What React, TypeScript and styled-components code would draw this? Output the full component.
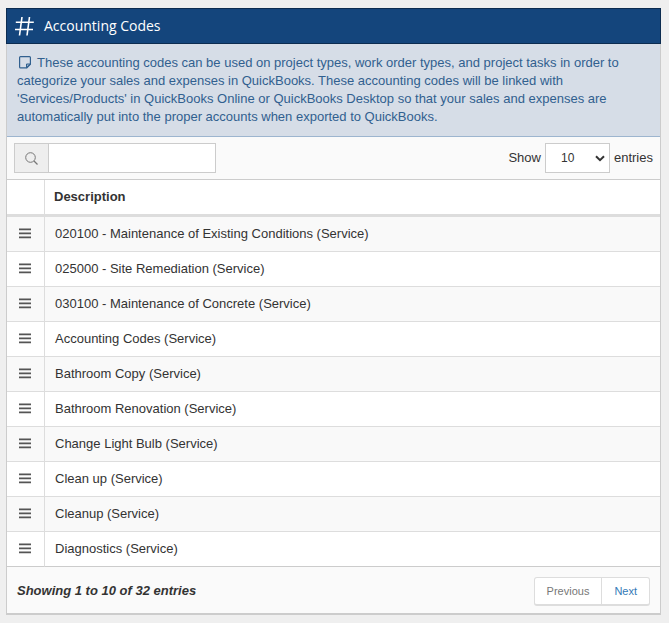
import React, { useState } from "react";
import styled, { createGlobalStyle } from "styled-components";

const GlobalStyle = createGlobalStyle`
  * { box-sizing: border-box; }
  body {
    margin: 0;
    background: #efefef;
    color: #333;
    font-family: "Liberation Sans", Arial, sans-serif;
    font-size: 13px;
    line-height: 18px;
  }
  button, input, select { font: inherit; }
`;

const Page = styled.main`
  padding: 8px;
  padding-left: 6px;
`;

const Header = styled.header`
  display: flex;
  align-items: center;
  gap: 10px;
  height: 36px;
  padding: 0 8px;
  background: #14457c;
  border: 1px solid #0c2c50;
  color: #fff;
`;

const Title = styled.h1`
  margin: 0;
  font: 400 14px/20px "Open Sans", sans-serif;
`;

const Body = styled.section`
  border: 1px solid #ccc;
  border-top: 0;
  border-bottom-width: 2px;
  background: #fafafa;
`;

const Info = styled.p`
  margin: 0;
  padding: 10px 30px 10px 10px;
  min-height: 93px;
  border-bottom: 1px solid #9db5cf;
  background: #d6dde7;
  color: #31608f;
  svg { vertical-align: -2px; margin: 0 6px 0 2px; }
`;

const Toolbar = styled.div`
  display: flex;
  justify-content: space-between;
  align-items: center;
  padding: 6px 7px;
  border-bottom: 1px solid #ccc;
`;

const Search = styled.label`
  display: flex;
  width: 202px;
  height: 30px;
  border: 1px solid #ccc;
  background: #fff;
`;

const SearchIcon = styled.span`
  display: flex;
  align-items: center;
  justify-content: center;
  flex: 0 0 34px;
  background: #eee;
  border-right: 1px solid #ccc;
`;

const SearchInput = styled.input`
  flex: 1;
  min-width: 0;
  border: 0;
  padding: 0 8px;
  outline: none;
  background: transparent;
`;

const Length = styled.label`
  display: flex;
  align-items: center;
  gap: 4px;
`;

const SelectBox = styled.span`
  display: grid;
  align-items: center;
  width: 65px;
  height: 30px;
  border: 1px solid #ccc;
  background: #fff;
  > * { grid-area: 1 / 1; }
  svg { justify-self: end; margin-right: 4px; pointer-events: none; }
`;

const Select = styled.select`
  appearance: none;
  width: 100%;
  height: 100%;
  border: 0;
  padding: 0 20px 0 15px;
  background: transparent;
  color: #333;
  font-size: 12px;
`;

const Table = styled.table`
  width: 100%;
  border-collapse: separate;
  border-spacing: 0;
  background: #fff;
`;

const HeadCell = styled.th`
  height: 37px;
  padding: 0 9px;
  border-bottom: 3px solid #ddd;
  text-align: left;
`;

const HandleHead = styled(HeadCell)`
  width: 38px;
  border-right: 1px solid #ddd;
`;

const Row = styled.tr`
  &:nth-child(odd) { background: #f9f9f9; }
  &:last-child td { border-bottom-color: #ccc; }
`;

const Cell = styled.td`
  height: 35px;
  padding: 0 10px;
  border-bottom: 1px solid #ddd;
`;

const HandleCell = styled(Cell)`
  padding: 0 12px 2px;
  border-right: 1px solid #ddd;
  svg { display: block; }
`;

const Footer = styled.footer`
  display: flex;
  align-items: center;
  justify-content: space-between;
  height: 46px;
  padding: 2px 10px 0;
`;

const Summary = styled.strong`
  font-style: italic;
`;

const Pager = styled.nav`
  display: flex;
  height: 29px;
  border: 1px solid #ddd;
  border-bottom-width: 2px;
  border-radius: 3px;
  background: #fff;
`;

const PageButton = styled.button<{ $muted?: boolean }>`
  padding: 0 12px;
  border: 0;
  background: transparent;
  color: ${(p) => (p.$muted ? "#777" : "#337ab7")};
  font-size: 11px;
  & + & { border-left: 1px solid #ddd; }
`;

const codes = [
  "020100 - Maintenance of Existing Conditions (Service)",
  "025000 - Site Remediation (Service)",
  "030100 - Maintenance of Concrete (Service)",
  "Accounting Codes (Service)",
  "Bathroom Copy (Service)",
  "Bathroom Renovation (Service)",
  "Change Light Bulb (Service)",
  "Clean up (Service)",
  "Cleanup (Service)",
  "Diagnostics (Service)",
];

const HashIcon = () => (
  <svg width="19" height="19" viewBox="0 0 19 19" fill="none" stroke="currentColor" strokeWidth="1.6" aria-hidden="true">
    <path d="M7 0 4.5 18.5M14.5 0 12 18.5M.8 5.2H18.8M0 12.5H18" />
  </svg>
);

const NoteIcon = () => (
  <svg width="12" height="13" viewBox="0 0 12 13" fill="none" stroke="currentColor" aria-hidden="true">
    <path d="M1.5.6h9q.9 0 .9.9v6.8L7.8 11.9H1.5q-.9 0-.9-.9V1.5Q.6.6 1.5.6Z" strokeWidth="1.2" />
    <path d="M7.5 11.7V8h3.8Z" fill="currentColor" fillOpacity=".35" />
  </svg>
);

const MagnifierIcon = () => (
  <svg width="13" height="13" viewBox="0 0 13 13" fill="none" stroke="#777" aria-hidden="true">
    <circle cx="5.5" cy="5.5" r="4.8" />
    <path d="m9 9 3.5 3.5" strokeWidth="1.3" />
  </svg>
);

const HandleIcon = () => (
  <svg width="12" height="11" viewBox="0 0 12 11" fill="none" stroke="#555" strokeWidth="1.6" aria-hidden="true">
    <path d="M0 1.4h12M0 5.4h12M0 9.4h12" />
  </svg>
);

const ChevronIcon = () => (
  <svg width="10" height="7" viewBox="0 0 10 7" fill="none" stroke="#333" strokeWidth="2" aria-hidden="true">
    <path d="m1 1.2 4 4 4-4" />
  </svg>
);

export default function App() {
  const [query, setQuery] = useState("");
  const rows = codes.filter((c) => c.toLowerCase().includes(query.toLowerCase()));
  return (
    <Page>
      <GlobalStyle />
      <Header>
        <HashIcon />
        <Title>Accounting Codes</Title>
      </Header>
      <Body>
        <Info>
          <NoteIcon />
          These accounting codes can be used on project types, work order types, and project tasks in order to
          categorize your sales and expenses in QuickBooks. These accounting codes will be linked with
          'Services/Products' in QuickBooks Online or QuickBooks Desktop so that your sales and expenses are
          automatically put into the proper accounts when exported to QuickBooks.
        </Info>
        <Toolbar>
          <Search>
            <SearchIcon><MagnifierIcon /></SearchIcon>
            <SearchInput aria-label="Search" value={query} onChange={(e) => setQuery(e.target.value)} />
          </Search>
          <Length>
            Show
            <SelectBox>
              <Select defaultValue="10">
                <option>10</option>
                <option>25</option>
                <option>50</option>
              </Select>
              <ChevronIcon />
            </SelectBox>
            entries
          </Length>
        </Toolbar>
        <Table>
          <thead>
            <tr>
              <HandleHead aria-label="Reorder" />
              <HeadCell scope="col">Description</HeadCell>
            </tr>
          </thead>
          <tbody>
            {rows.map((code) => (
              <Row key={code}>
                <HandleCell><HandleIcon /></HandleCell>
                <Cell>{code}</Cell>
              </Row>
            ))}
          </tbody>
        </Table>
        <Footer>
          <Summary>Showing 1 to 10 of 32 entries</Summary>
          <Pager aria-label="Pagination">
            <PageButton type="button" $muted>Previous</PageButton>
            <PageButton type="button">Next</PageButton>
          </Pager>
        </Footer>
      </Body>
    </Page>
  );
}
